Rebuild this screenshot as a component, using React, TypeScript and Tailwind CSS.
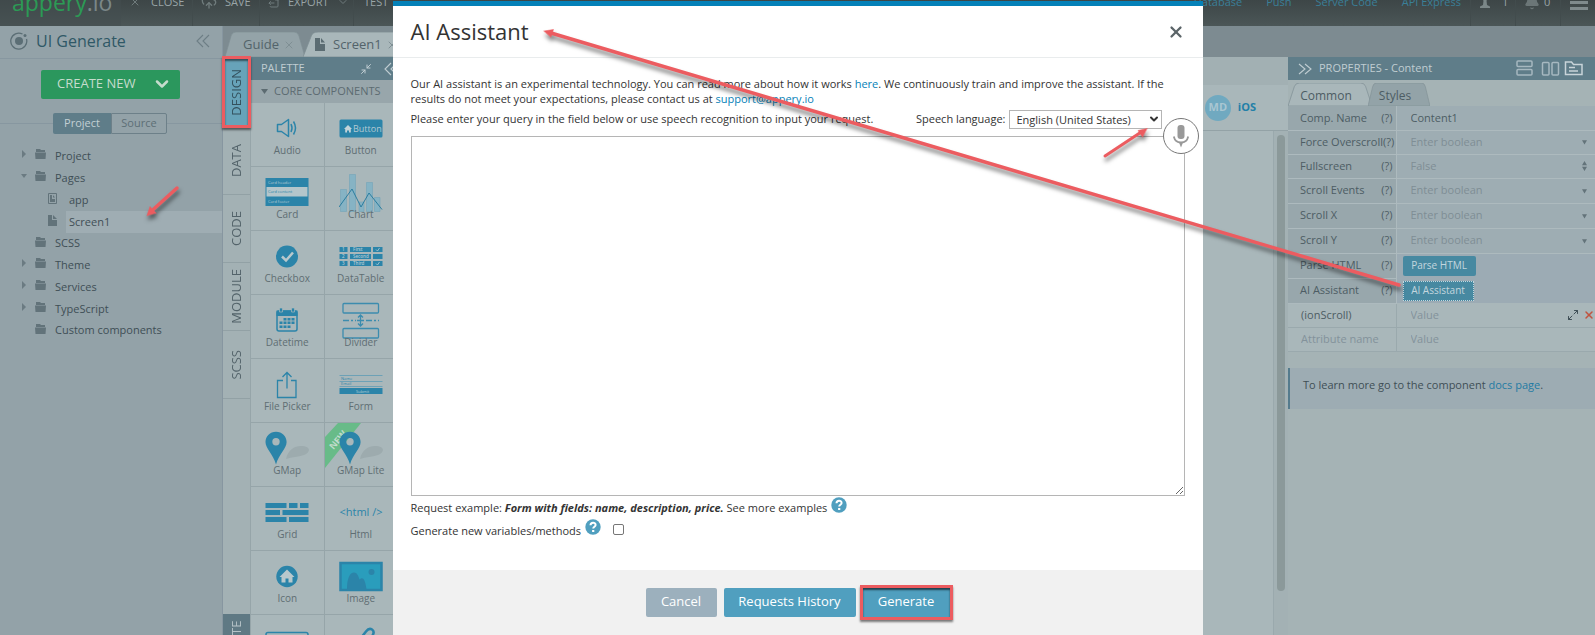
import type { ReactNode } from 'react'
import { Bell, ChevronDown, CloudUpload, FileOutput, Maximize2, Minimize2, X } from 'lucide-react'

const tree = [
  { label: 'Project', kind: 'folder', arrow: 'closed' },
  { label: 'Pages', kind: 'folder', arrow: 'open' },
  { label: 'app', kind: 'page' },
  { label: 'Screen1', kind: 'page', selected: true },
  { label: 'SCSS', kind: 'leaf' },
  { label: 'Theme', kind: 'folder', arrow: 'closed' },
  { label: 'Services', kind: 'folder', arrow: 'closed' },
  { label: 'TypeScript', kind: 'folder', arrow: 'closed' },
  { label: 'Custom components', kind: 'leaf' },
]

const sideTabs = ['DATA', 'CODE', 'MODULE', 'SCSS']

const booleanProps = [
  { label: 'Force Overscroll', value: 'Enter boolean', height: 'h-6' },
  { label: 'Fullscreen', value: 'False', stepper: true, height: 'h-6' },
  { label: 'Scroll Events', value: 'Enter boolean', height: 'h-[25px]' },
  { label: 'Scroll X', value: 'Enter boolean', height: 'h-[25px]' },
  { label: 'Scroll Y', value: 'Enter boolean', height: 'h-[25px]' },
]

// Palette drawings, all on a 44x40 canvas
const paletteItems: { label: string; isNew?: boolean; art: ReactNode }[] = [
  {
    label: 'Audio',
    art: (
      <g fill="none" stroke="#2b84a9" strokeWidth="1.5" strokeLinejoin="round">
        <path d="M12.5 15.5h4l7-5v17l-7-5h-4z" />
        <path d="M26 15q2 4 0 8M28.500 12.500q4 6.500 0 13" />
      </g>
    ),
  },
  {
    label: 'Button',
    art: (
      <>
        <rect x="0.5" y="10.5" width="43" height="18" rx="1.5" fill="#2b84a9" />
        <path d="M5 20l4-4 4 4h-1.200v3.500H10v-2H8v2H6.200V20z" fill="#c3d3d9" />
        <text x="14" y="23" fontSize="9" fill="#b4cad3">Button</text>
      </>
    ),
  },
  {
    label: 'Card',
    art: (
      <>
        <rect x="0.5" y="5" width="43" height="28" fill="#2b84a9" />
        <rect x="1.5" y="14" width="41" height="9.5" fill="#b4c6cb" />
        <text x="3" y="11" fontSize="4" fill="#b4cad3">Card header</text>
        <text x="3" y="20" fontSize="4" fill="#2b84a9">Card content</text>
        <text x="3" y="30" fontSize="4" fill="#b4cad3">Card footer</text>
      </>
    ),
  },
  {
    label: 'Chart',
    art: (
      <>
        <path
          d="M1.500 16.500h6v22h-6zM10.500 1.500h6v37h-6zM20 29h5v9.500h-5zM27.500 9.500h6v29h-6zM35.500 24.500h5.500v14h-5.500z"
          fill="#86b3c4"
          stroke="#74a5b8"
          strokeWidth="0.6"
        />
        <path d="M0 34L13 16l9 18 8-14 13 16.500" fill="none" stroke="#2b7d9f" strokeWidth="1" />
      </>
    ),
  },
  {
    label: 'Checkbox',
    art: (
      <>
        <circle cx="22" cy="19.5" r="11" fill="#2b84a9" />
        <path d="M17 19.500l4 4 7-8" fill="none" stroke="#b8c8cc" strokeWidth="2.5" />
      </>
    ),
  },
  {
    label: 'DataTable',
    art: (
      <>
        <path
          d="M0.500 10H8.500v5H0.500zM11 10h21v5H11zM34 10h9.500v5H34zM0.500 17H8.500v5H0.500zM11 17h21v5H11zM34 17h9.500v5H34zM0.500 24H8.500v5H0.500zM11 24h21v5H11zM34 24h9.500v5H34z"
          fill="#2b84a9"
        />
        <g fontSize="4.5" fontWeight="600" fill="#b4cad3">
          <text x="3" y="14">1</text>
          <text x="14" y="14">First</text>
          <text x="3" y="21">2</text>
          <text x="14" y="21">Second</text>
          <text x="3" y="28">3</text>
          <text x="14" y="28">Third</text>
        </g>
        <path d="M37 12.500l1.500 1.500 2-3M37 26.500l1.500 1.500 2-3" fill="none" stroke="#b4cad3" strokeWidth="0.8" />
      </>
    ),
  },
  {
    label: 'Datetime',
    art: (
      <>
        <rect x="12" y="10" width="20" height="20" rx="2" fill="none" stroke="#2b84a9" strokeWidth="1.5" />
        <path d="M11.500 9.500h21v5.500h-21z" fill="#2b84a9" />
        <path d="M14.500 7h3v4h-3zM26.500 7h3v4h-3z" fill="#2b84a9" stroke="#a9b7ba" strokeWidth="0.7" />
        <path
          d="M18.500 17h3v2.500h-3zM22.500 17h3v2.500h-3zM26.500 17h3v2.500h-3zM14.500 20.500h3v2.500h-3zM18.500 20.500h3v2.500h-3zM22.500 20.500h3v2.500h-3zM26.500 20.500h3v2.500h-3zM14.500 24.500h3v2.500h-3zM18.500 24.500h3v2.500h-3zM22.500 24.500h3v2.500h-3z"
          fill="#2b84a9"
        />
      </>
    ),
  },
  {
    label: 'Divider',
    art: (
      <g fill="none" stroke="#3c8cae" strokeWidth="1.3">
        <rect x="4" y="2.5" width="35.5" height="9.5" rx="1" />
        <rect x="4" y="27.5" width="35.5" height="9.5" rx="1" />
        <path d="M4 19.500h13M27 19.500h13" strokeDasharray="6 2 2 2" />
        <path d="M18 19.500h7M21.500 14v11M19 16.500l2.500-2.500 2.500 2.500M19 22.500l2.500 2.500 2.500-2.500" />
      </g>
    ),
  },
  {
    label: 'File Picker',
    art: (
      <path
        d="M18 15.500h-5.500V32.500h18.500V15.500H26M22 23.500V8M17.500 12L22 7.500l4.500 4.500"
        fill="none"
        stroke="#2b84a9"
        strokeWidth="1.3"
      />
    ),
  },
  {
    label: 'Form',
    art: (
      <>
        <path d="M0.500 10.500h43M0.500 16.500h43M0.500 21.500h43" stroke="#5e9cb5" strokeWidth="0.8" />
        <rect x="0.5" y="23" width="43" height="6" fill="#2b84a9" />
        <text x="2" y="14.5" fontSize="4" fill="#2b84a9">Name</text>
        <text x="2" y="20" fontSize="4" fill="#2b84a9">Email</text>
        <text x="17" y="27.5" fontSize="4" fill="#b4cad3">Submit</text>
      </>
    ),
  },
  { label: 'GMap', art: <MapPin /> },
  { label: 'GMap Lite', isNew: true, art: <MapPin /> },
  {
    label: 'Grid',
    art: (
      <path
        d="M0.500 10h21v5h-21zM24 10h8.500v5H24zM35 10h8.500v5H35zM0.500 17h14.500v5H0.500zM17.500 17h26v5h-26zM0.500 24h21v5h-21zM24 24h19.500v5H24z"
        fill="#2b84a9"
      />
    ),
  },
  {
    label: 'Html',
    art: (
      <text x="22" y="23" fontSize="11" textAnchor="middle" fill="#2b84a9">
        &lt;html /&gt;
      </text>
    ),
  },
  {
    label: 'Icon',
    art: (
      <>
        <circle cx="22" cy="19.5" r="10.7" fill="#2b84a9" />
        <path d="M14.500 20L22 12.500l7.500 7.500h-2v5.500h-4v-4h-3v4h-4V20z" fill="#b8c8cc" />
      </>
    ),
  },
  {
    label: 'Image',
    art: (
      <>
        <rect x="1.5" y="6" width="41" height="27" fill="#2a9dbc" stroke="#2b84a9" strokeWidth="2.5" />
        <path d="M8 32c0-11 3-16.500 7-16.500 3 0 4.500 3.500 5.500 7 4-4 6 2 7 9.500z" fill="#2b84a9" />
        <circle cx="32.5" cy="15" r="3" fill="#2b84a9" />
      </>
    ),
  },
  {
    label: 'Input',
    art: <rect x="1" y="11.5" width="42" height="18" rx="2" fill="none" stroke="#2b84a9" strokeWidth="1.5" />,
  },
  {
    label: 'Link',
    art: (
      <path
        d="M18 22l9-11.500q3-4 6-2t0.500 6l-8 10"
        fill="none"
        stroke="#2b84a9"
        strokeWidth="2.5"
      />
    ),
  },
]

function MapPin() {
  return (
    <>
      <path d="M21 30c2-9 8-13 15-13 10 0 10 6 3 9-6 2.500-12 1.500-18 4z" fill="#9dabae" />
      <path
        fillRule="evenodd"
        d="M11 2.700c6 0 10.600 4.600 10.600 10.300C21.600 19.500 14 25 11 35.500 8 25 0.500 19.500 0.500 13 0.500 7.300 5 2.700 11 2.700zM11 9a3.700 3.700 0 1 0 0 7.400A3.700 3.700 0 0 0 11 9z"
        fill="#2b84a9"
      />
    </>
  )
}

function DoubleChevron({ right = false }: { right?: boolean }) {
  return (
    <svg viewBox="0 0 14 14" className="h-[14px] w-[14px] shrink-0" fill="none" stroke="currentColor" strokeWidth="1.1">
      {right ? <path d="M1 2l6 5-6 5M7 2l6 5-6 5" /> : <path d="M7 1L1 7l6 6M13 1L7 7l6 6" />}
    </svg>
  )
}

function HelpDot() {
  return (
    <button type="button" aria-label="Help" className="relative -top-1 mx-1 inline-block size-4 align-middle">
      <svg viewBox="0 0 16 16" className="size-4">
        <circle cx="8" cy="8" r="7.7" fill="#509fbf" />
        <path d="M5.500 6.200C5.600 3 10.600 3 10.600 6c0 1.800-2.400 1.800-2.400 3.600" fill="none" stroke="#fff" strokeWidth="2" />
        <rect x="7.1" y="11" width="2.2" height="2" fill="#fff" />
      </svg>
    </button>
  )
}

function TopBar() {
  return (
    <header className="flex h-[26px] items-end overflow-hidden bg-linear-to-b from-[#3d4647] to-[#4b5657] text-[11px] text-[#99a5a7]">
      <div className="flex h-12 w-full shrink-0 items-center">
        <div className="flex h-full w-[121px] items-center bg-[#434e4f]/50 pl-3 text-[23px] text-[#2c9a55]">
          appery<span className="text-[#7b8788]">.io</span>
        </div>
        <button className="flex h-full w-[72px] items-center gap-[10px] border-r border-[#424c4d] pl-2">
          <X className="size-3 text-[#6f7b7c]" />
          CLOSE
        </button>
        <button className="flex h-full w-[67px] items-center gap-2 border-r border-[#424c4d] pl-2">
          <CloudUpload className="size-4 text-[#6f7b7c]" />
          SAVE
        </button>
        <button className="flex h-full w-[94px] items-center gap-2 border-r border-[#424c4d] pl-2">
          <FileOutput className="size-3 text-[#6f7b7c]" />
          EXPORT
          <ChevronDown className="size-3 text-[#6f7b7c]" />
        </button>
        <button className="h-full pl-[10px]">TEST</button>
        <nav className="ml-auto flex h-full items-center gap-6 pr-[9px] text-[#3a7f98]">
          <a href="#database">Database</a>
          <a href="#push">Push</a>
          <a href="#server">Server Code</a>
          <a href="#api">API Express</a>
        </nav>
        <button className="flex h-full w-[45px] items-center gap-3 border-l border-[#424c4d] pl-[9px]">
          <svg viewBox="0 0 10 14" className="h-[14px] w-[10px] fill-[#7b8788]">
            <path d="M5 0a3 3 0 0 1 1.500 5.500L7 10l3 1.500V13H0v-1.500L3 10l0.500-4.500A3 3 0 0 1 5 0z" />
          </svg>
          1
        </button>
        <button className="flex h-full w-[45px] items-center gap-1 border-l border-[#424c4d] pl-2">
          <Bell className="size-4 fill-[#6b7677] text-[#6b7677]" />0
        </button>
        <button aria-label="Menu" className="flex h-full w-[35px] items-center border-l border-[#424c4d] pl-[9px]">
          <svg viewBox="0 0 18 16" className="h-4 w-[18px] fill-[#7f8a8c]">
            <path d="M0 1h18v3H0zM0 7h18v3H0zM0 13h18v3H0z" />
          </svg>
        </button>
      </div>
    </header>
  )
}

function ProjectPanel() {
  return (
    <aside className="w-[223px] shrink-0 border-r border-[#8796a0] bg-[#93a2a8] text-[#3f4f56]">
      <div className="flex h-[33px] items-center border-b border-[#8797a0] pr-3 pb-[2px] pl-[10px]">
        <svg viewBox="0 0 18 18" className="size-[18px]">
          <path d="M12.500 2A8 8 0 1 0 16.500 7" fill="none" stroke="#5b6e75" strokeWidth="1.3" />
          <circle cx="9" cy="9" r="4" fill="#5b6e75" />
          <circle cx="15" cy="3.5" r="1.5" fill="#5b6e75" />
        </svg>
        <h1 className="mr-auto ml-2 text-base text-[#2f5866]">UI Generate</h1>
        <span className="text-[#6d7e85]">
          <DoubleChevron />
        </span>
      </div>
      <button className="mt-[11px] ml-[41px] flex h-[29px] w-[139px] items-center justify-between rounded-xs bg-[#2b975d] pr-2 pb-[2px] pl-4 text-[13px] font-medium text-[#c5dccd]">
        CREATE NEW
        <ChevronDown className="size-5" strokeWidth={3} />
      </button>
      <div className="mt-[14px] flex h-[21px] items-center text-[11px]">
        <div className="h-px w-[53px] bg-[#8797a0]" />
        <button className="h-full w-[58px] rounded-l-xs bg-[#5f7d89] text-[#c3d0d4]">Project</button>
        <button className="h-full w-[56px] rounded-r-xs border border-[#6d8089] text-[#5d6f76]">Source</button>
        <div className="h-px flex-1 bg-[#8797a0]" />
      </div>
      <ul className="mt-[11px] text-[11px]">
        {tree.map((node) => (
          <li
            key={node.label}
            className={node.kind === 'leaf' ? 'flex h-[21px] items-center' : 'flex h-[22px] items-center'}
          >
            {node.kind !== 'page' ? (
              <>
                <span className="w-[35px] pb-1 pl-[21px]">
                  {node.arrow && (
                    <svg viewBox="0 0 6 8" className="h-2 w-[6px] fill-[#6b7b82]">
                      {node.arrow === 'open' ? <path d="M0 2h6L3 6z" /> : <path d="M1 0v8l4-4z" />}
                    </svg>
                  )}
                </span>
                <svg viewBox="0 0 11 10" className="mr-[9px] mb-1 h-[10px] w-[11px] fill-[#62737a]">
                  <path d="M1 0h4l1 1h4v2H1zM0 3.500h11L10.500 10H0.500z" />
                </svg>
                {node.label}
              </>
            ) : (
              <>
                <svg viewBox="0 0 9 11" className="mr-[9px] mb-1 ml-12 h-[11px] w-[9px] fill-[#62737a]">
                  {!node.selected && <path d="M0.500 0.500h8v10h-8z" fill="none" stroke="#62737a" />}
                  <path d={node.selected ? 'M0 0h4v5h5v6H0zM5 0l4 4H5z' : 'M2 2h2v4h3v3H2zM5 2l2 2.500H5z'} />
                </svg>
                <span
                  className={
                    node.selected
                      ? 'flex h-full flex-1 items-center bg-[#9fadb3] pl-[3px]'
                      : 'flex h-full flex-1 items-center pl-[3px]'
                  }
                >
                  {node.label}
                </span>
              </>
            )}
          </li>
        ))}
      </ul>
    </aside>
  )
}

function TabShape({ fill }: { fill: string }) {
  return (
    <svg viewBox="0 0 80 25" preserveAspectRatio="none" className="absolute inset-0 h-full w-full">
      <path d="M0 25L6 4Q7 0 11 0H69Q73 0 74 4L80 25z" fill={fill} stroke="#7f8f94" strokeWidth="0.7" />
    </svg>
  )
}

function Workspace() {
  return (
    <main className="flex min-w-0 flex-1 flex-col">
      <div className="flex h-[31px] items-end bg-[#7d8b91] text-[13px] text-[#53636a]">
        <div className="relative ml-[2px] flex h-[25px] w-20 items-center pl-[18px]">
          <TabShape fill="#94a3a8" />
          <span className="relative">Guide</span>
          <X className="relative ml-1 size-3 text-[#7f8f94]" />
        </div>
        <div className="relative -ml-[2px] flex h-[25px] w-[110px] items-center gap-2 pl-3">
          <TabShape fill="#a9b7ba" />
          <svg viewBox="0 0 10 13" className="relative h-[13px] w-[10px] fill-[#5b6c72]">
            <path d="M0 0h5v6h5v7H0zM6 0l4 4.500H6z" />
          </svg>
          <span className="relative">Screen1</span>
          <X className="relative -ml-1 size-3 text-[#7f8f94]" />
        </div>
      </div>
      <div className="flex min-h-0 flex-1">
        <div className="flex w-7 shrink-0 flex-col border-r border-[#96a5a9] bg-[#a3b1b4] text-[13px] text-[#53636a]">
          <button className="relative flex h-[70px] items-center justify-center bg-[#67a3b9] text-[#34515d]">
            <span className="rotate-180 [writing-mode:vertical-rl]">DESIGN</span>
            <span className="absolute -inset-x-px -inset-y-px z-10 border-3 border-[#ec5c60] shadow-[0_2px_2px_rgba(0,0,0,0.5),inset_0_2px_2px_rgba(0,0,0,0.5)]" />
          </button>
          {sideTabs.map((tab) => (
            <button key={tab} className="flex h-[68px] items-center justify-center border-b border-[#92a1a5]">
              <span className="rotate-180 [writing-mode:vertical-rl]">{tab}</span>
            </button>
          ))}
          <button className="mt-auto flex h-[21px] justify-center bg-[#5f7984] pt-2 font-medium text-[#b5c2c7]">
            <span className="rotate-180 [writing-mode:vertical-rl]">TE</span>
          </button>
        </div>
        <section className="flex w-[147px] shrink-0 flex-col">
          <h2 className="flex h-[23px] shrink-0 items-center bg-[#5f7d89] pl-[10px] text-[11px] font-medium text-[#c0cdd2]">
            PALETTE
            <Minimize2 className="mr-3 ml-auto size-3" />
            <DoubleChevron />
          </h2>
          <h3 className="flex h-[23px] shrink-0 items-center gap-[6px] bg-[#98a6ab] pl-[10px] text-[11px] text-[#5c6b71]">
            <svg viewBox="0 0 7 5" className="h-[5px] w-[7px] fill-[#5c6b71]">
              <path d="M0 0h7L3.500 5z" />
            </svg>
            CORE COMPONENTS
          </h3>
          <div className="grid min-h-0 flex-1 auto-rows-[64px] grid-cols-2 overflow-hidden bg-[#a9b7ba]">
            {paletteItems.map((item) => (
              <div
                key={item.label}
                className="relative flex flex-col items-center border-r border-b border-[#96a5a9] pt-[6px]"
              >
                {item.isNew && (
                  <svg viewBox="0 0 46 46" className="absolute top-0 left-0 size-[46px]">
                    <path d="M13 0H36L0 45V14z" fill="#68bb88" />
                    <text
                      x="13"
                      y="20"
                      fontSize="9"
                      fontWeight="700"
                      textAnchor="middle"
                      transform="rotate(-50 13 17)"
                      fill="#c3dccc"
                    >
                      NEW
                    </text>
                  </svg>
                )}
                <svg viewBox="0 0 44 40" className="relative h-10 w-11 shrink-0">
                  {item.art}
                </svg>
                <span className="relative -mt-[7px] text-[10px] leading-4 text-[#5f6e73]">{item.label}</span>
              </div>
            ))}
          </div>
        </section>
        <div className="flex min-w-0 flex-1 flex-col bg-[#a9b7ba]">
          <div className="h-7 bg-[#a2b0b3]" />
          <div className="flex h-[46px] items-center justify-end gap-[7px] border-b border-[#93a2a6] pr-8 text-[11px] font-bold text-[#2380a8]">
            <span className="flex size-[26px] items-center justify-center rounded-full bg-[#70a9c0] text-[#a9c6d2]">
              MD
            </span>
            iOS
          </div>
          <div className="flex flex-1 justify-end">
            <div className="w-[15px] border-l border-[#9aa9ad] bg-[#a3b1b4] pt-1 pl-[3px]">
              <div className="h-[456px] w-2 rounded-full bg-[#8b999a]" />
            </div>
          </div>
        </div>
      </div>
    </main>
  )
}

function PropLabel({ id, children }: { id: string; children: ReactNode }) {
  return (
    <th className="w-[108px] border-r border-b border-[#adbabe] bg-[#98a7ac] p-0 font-normal">
      <label htmlFor={id} className="flex justify-between pr-[3px] pl-3 whitespace-nowrap">
        {children}
        <span>(?)</span>
      </label>
    </th>
  )
}

function PropertiesPanel() {
  return (
    <aside className="mt-[31px] w-[307px] shrink-0 bg-[#a5b3b5] text-[11px] text-[#4d5d64]">
      <div className="flex h-[23px] items-center bg-[#5f7d89] pr-3 pl-[10px] text-[#c0cdd2]">
        <DoubleChevron right />
        <h2 className="ml-[7px] font-medium">PROPERTIES - Content</h2>
        <svg viewBox="0 0 68 17" className="ml-auto h-[17px] w-[68px]" fill="none" stroke="#a6b8c0" strokeWidth="1.5">
          <rect x="2" y="1" width="15" height="5.5" rx="1" />
          <rect x="2" y="9.5" width="15" height="5.5" rx="1" />
          <rect x="27.5" y="2.5" width="6.5" height="12.5" rx="1" />
          <rect x="37" y="2.500" width="6.5" height="12.5" rx="1" />
          <path d="M50.500 14.500V2h6l2 2.500H67v10zM54 7.500h6M54 11h9" stroke="#c8d4d9" />
        </svg>
      </div>
      <div className="flex h-[26px] items-end text-[12px]">
        <button className="relative h-[23px] w-[84px] pt-[2px]">
          <TabShape fill="#a9b7ba" />
          <span className="relative pr-2">Common</span>
        </button>
        <button className="relative -ml-1 h-[23px] w-[62px] pt-[2px]">
          <TabShape fill="#93a3a8" />
          <span className="relative pr-2">Styles</span>
        </button>
      </div>
      <table className="w-full table-fixed border-collapse text-left">
        <tbody>
          <tr className="h-6">
            <PropLabel id="comp-name">Comp. Name</PropLabel>
            <td className="border-b border-[#adbabe] bg-[#9eadb3] p-0">
              <input id="comp-name" defaultValue="Content1" className="block w-full pl-[14px]" />
            </td>
          </tr>
          {booleanProps.map((prop) => (
            <tr key={prop.label} className={prop.height}>
              <PropLabel id={prop.label}>{prop.label}</PropLabel>
              <td className="border-b border-[#adbabe] bg-[#9eadb3] p-0">
                <div className="flex items-center pr-2 text-[#7f8e95]">
                  <select id={prop.label} className="w-full flex-1 appearance-none pl-[14px]">
                    <option>{prop.value}</option>
                  </select>
                  <svg viewBox="0 0 6 12" className="h-3 w-[5px] fill-[#63737a]">
                    {prop.stepper ? <path d="M0 5l3-5 3 5zM0 7h6l-3 5z" /> : <path d="M0 4h6L3 9z" />}
                  </svg>
                </div>
              </td>
            </tr>
          ))}
          <tr className="h-[25px]">
            <PropLabel id="parse-html">Parse HTML</PropLabel>
            <td className="bg-[#9cabb4] p-0 pl-[6px]">
              <button id="parse-html" className="block h-5 w-[73px] rounded-xs bg-[#4789a1] text-[10px] font-medium text-[#c3d6de]">
                Parse HTML
              </button>
            </td>
          </tr>
          <tr className="h-[25px]">
            <PropLabel id="ai-assistant">AI Assistant</PropLabel>
            <td className="bg-[#9cabb4] p-0 pl-[6px]">
              <button id="ai-assistant" className="block h-5 w-[71px] border border-dotted border-[#c3d6de] bg-[#4789a1] text-[10px] font-medium text-[#c3d6de]">
                AI Assistant
              </button>
            </td>
          </tr>
          <tr className="h-6">
            <td className="border-r border-b border-[#9aa9ad] bg-[#a9b7ba] p-0 pl-[13px]">(ionScroll)</td>
            <td className="border-b border-[#9aa9ad] bg-[#a9b7ba] p-0">
              <div className="flex items-center gap-1">
                <input aria-label="ionScroll value" placeholder="Value" className="w-full min-w-0 flex-1 pl-[14px] placeholder:text-[#83929a]" />
                <Maximize2 className="size-3 shrink-0 text-[#3f4f56]" />
                <X className="size-3 shrink-0 text-[#c0543f]" strokeWidth={3} />
              </div>
            </td>
          </tr>
          <tr className="h-6">
            <td className="border-r border-b border-[#9aa9ad] bg-[#a9b7ba] p-0">
              <input aria-label="Attribute name" placeholder="Attribute name" className="block w-full pl-[13px] placeholder:text-[#83929a]" />
            </td>
            <td className="border-b border-[#9aa9ad] bg-[#a9b7ba] p-0">
              <input aria-label="Attribute value" placeholder="Value" className="block w-full pl-[14px] placeholder:text-[#83929a]" />
            </td>
          </tr>
        </tbody>
      </table>
      <p className="mt-4 h-[41px] border-l-2 border-[#547b8d] bg-[#9dacb3] pt-[9px] pl-[13px] text-[#3f4f56]">
        To learn more go to the component{' '}
        <a href="#docs" className="text-[#1f7ba3]">
          docs page
        </a>
        .
      </p>
    </aside>
  )
}

function AssistantDialog() {
  return (
    <div
      role="dialog"
      aria-labelledby="dialog-title"
      className="absolute inset-x-0 top-px bottom-0 mx-auto flex w-[810px] flex-col border-t-[5px] border-[#0581b8] bg-white text-[11px] text-[#333]"
    >
      <div className="flex h-[52px] items-center justify-between border-b border-[#e9eced] px-[18px]">
        <h2 id="dialog-title" className="text-[22px]">AI Assistant</h2>
        <button aria-label="Close">
          <X className="size-[18px] text-[#5b6468]" strokeWidth={3} />
        </button>
      </div>
      <div className="flex flex-1 flex-col px-[18px] pt-[18px]">
        <p className="pr-4 leading-[15px]">
          Our AI assistant is an experimental technology. You can read more about how it works{' '}
          <a href="#how" className="text-[#0581b8]">here</a>. We continuously train and improve the assistant. If the
          results do not meet your expectations, please contact us at{' '}
          <a href="mailto:support@appery.io" className="text-[#0581b8]">support@appery.io</a>
        </p>
        <div className="mt-1 flex items-center">
          <label htmlFor="query">
            Please enter your query in the field below or use speech recognition to input your request.
          </label>
          <label htmlFor="language" className="ml-auto">Speech language:</label>
          <div className="relative mr-[23px] ml-[3px]">
            <select
              id="language"
              className="block h-[19px] w-[153px] appearance-none border border-[#b5b5b5] bg-white pl-[7px] leading-4"
            >
              <option>English (United States)</option>
            </select>
            <ChevronDown className="pointer-events-none absolute top-[3px] right-[2px] size-3" strokeWidth={4} />
          </div>
        </div>
        <div className="relative mt-[7px]">
          <textarea id="query" className="block h-[360px] w-full border border-[#b5b5b5]" />
          <button
            aria-label="Speak"
            className="absolute -top-[18px] -right-[14px] flex size-9 items-center justify-center rounded-full border border-[#777] bg-white"
          >
            <svg viewBox="0 0 16 24" className="h-6 w-4">
              <rect x="4.5" y="1" width="7" height="14" rx="3" fill="#999" />
              <path d="M0.800 12.500c1.500 8 13 8 14.400 0" fill="none" stroke="#999" strokeWidth="1.8" />
              <path d="M6 18.500h4l-2 5z" fill="#999" />
            </svg>
          </button>
        </div>
        <p className="mt-1">
          Request example: <b className="italic">Form with fields: name, description, price.</b> See more examples
          <HelpDot />
        </p>
        <div className="mt-[6px] flex items-center">
          <label htmlFor="generate-vars">Generate new variables/methods</label>
          <HelpDot />
          <input
            id="generate-vars"
            type="checkbox"
            className="mb-1 ml-2 size-[11px] appearance-none rounded-xs border border-[#767676]"
          />
        </div>
      </div>
      <div className="flex h-[65px] items-center justify-center gap-[7px] bg-[#f1f1f1] text-[13px] font-medium text-white">
        <button className="h-[29px] w-[71px] rounded-xs bg-[#9cb0bd] pb-[2px]">Cancel</button>
        <button className="h-[29px] w-[132px] rounded-xs bg-[#509fbf] pb-[2px]">Requests History</button>
        <button className="relative h-[29px] w-[87px] bg-[#509fbf] pb-[2px]">
          Generate
          <span className="absolute -inset-[3px] border-3 border-[#ec5c60] shadow-[0_2px_2px_rgba(0,0,0,0.5),inset_0_2px_2px_rgba(0,0,0,0.6)]" />
        </button>
      </div>
    </div>
  )
}

function Arrows() {
  return (
    <svg
      viewBox="0 0 1595 635"
      className="pointer-events-none absolute top-0 left-0 h-[635px] w-[1595px] drop-shadow-[1px_4px_2px_rgba(0,0,0,0.5)]"
    >
      <g fill="#ec5c60" stroke="#ec5c60" strokeLinecap="round">
        <path d="M1399 285L551 33" strokeWidth="3.5" />
        <path d="M544 31l9.500-1.500-2.500 7.500z" strokeWidth="0.5" />
        <path d="M177 188L151 211.500" strokeWidth="3.5" />
        <path d="M147 215.500l3-9 6 6.500z" strokeWidth="0.5" />
        <path d="M1105 156L1142 131.500" strokeWidth="3" />
        <path d="M1147 128.500l-9 2 4.500 6.500z" strokeWidth="0.5" />
      </g>
    </svg>
  )
}

export default function App() {
  return (
    <div className="relative flex h-screen flex-col overflow-hidden bg-[#7d8b91] font-['Open_Sans',sans-serif] leading-normal">
      <TopBar />
      <div className="flex min-h-0 flex-1">
        <ProjectPanel />
        <Workspace />
        <PropertiesPanel />
      </div>
      <AssistantDialog />
      <Arrows />
    </div>
  )
}
